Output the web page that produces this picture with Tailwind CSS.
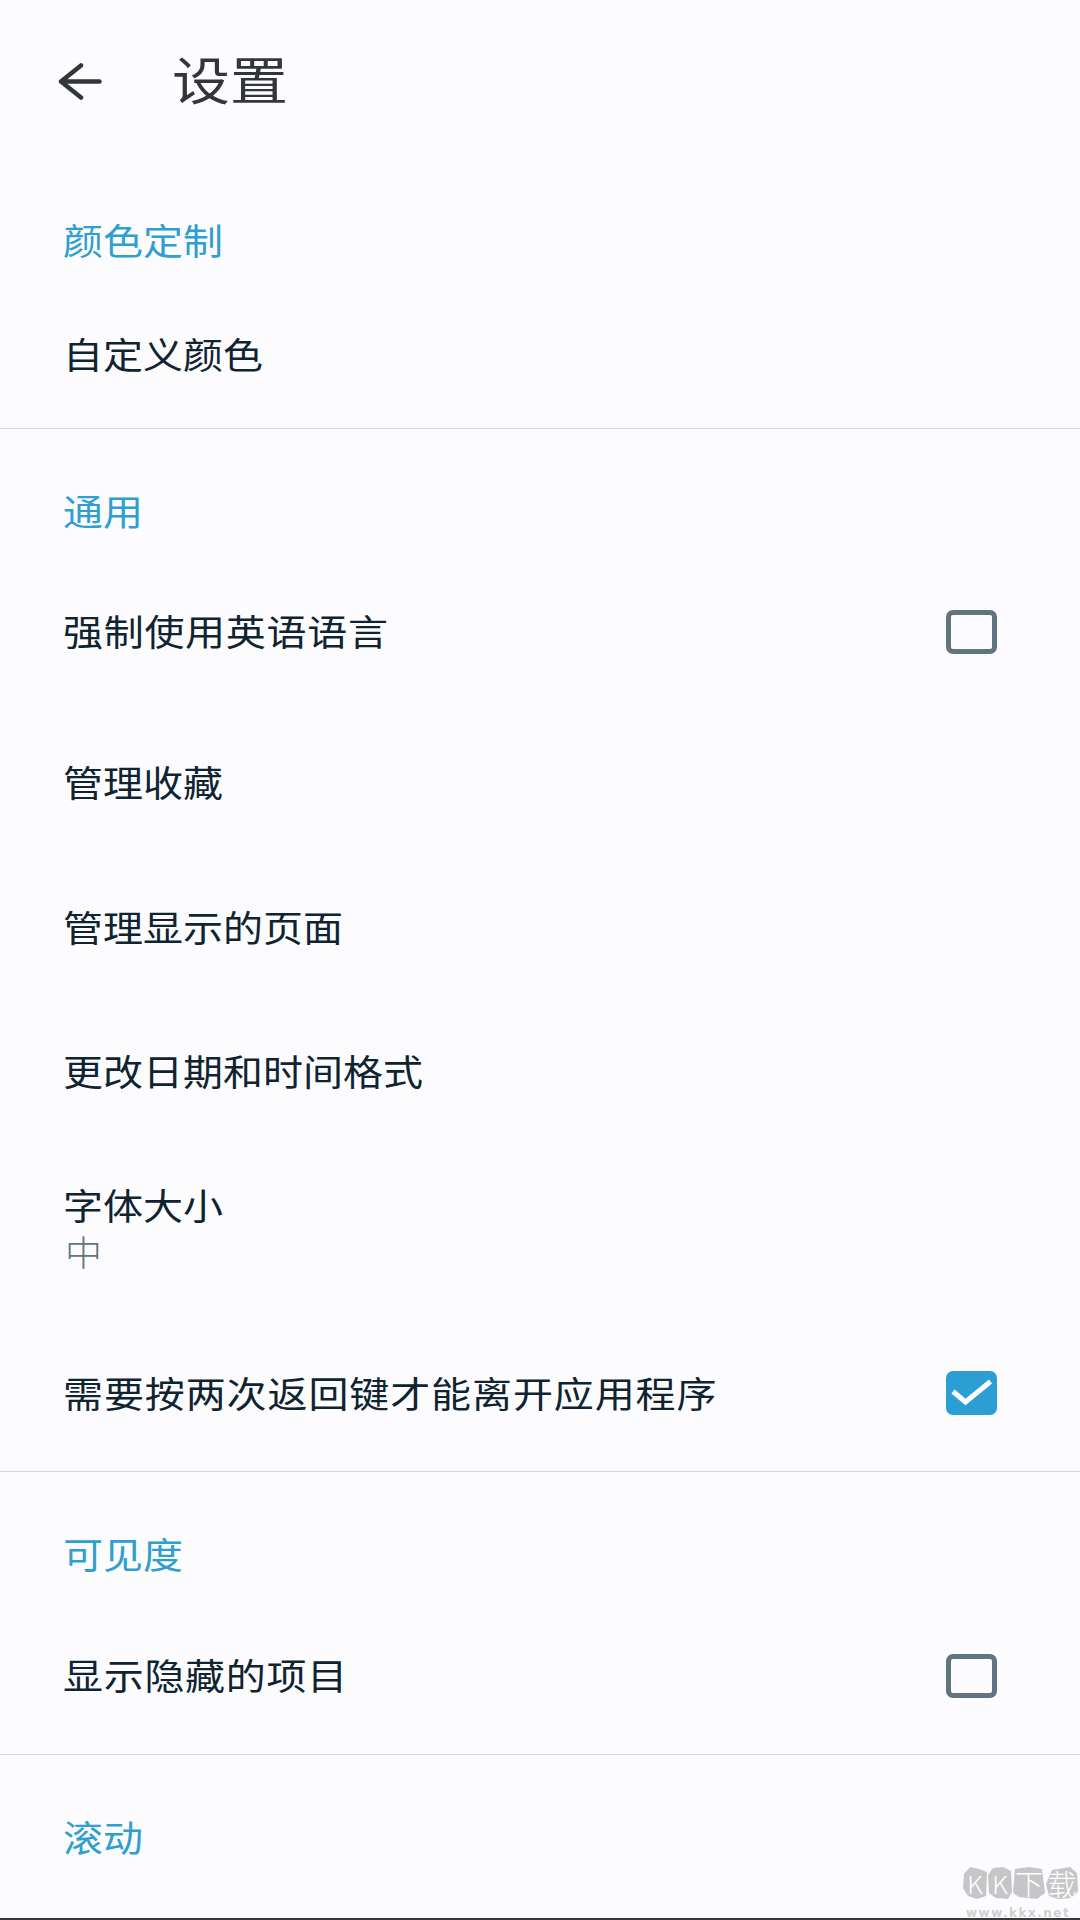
<!DOCTYPE html>
<html lang="zh-CN">
<head>
    <meta charset="UTF-8">
    <meta name="viewport" content="width=device-width, initial-scale=1.0">
    <title>设置</title>
    <script src="https://cdn.jsdelivr.net/npm/@tailwindcss/browser@4"></script>
</head>
<body class="bg-[#fcfcfe] font-['Noto_Sans_CJK_SC',sans-serif]">
    <div class="relative w-[1080px] h-[1920px] overflow-hidden">
        <!-- Header -->
        <div class="flex items-center h-[162px] pl-[58px] text-[#333638]">
            <svg class="w-[44px] h-[37px]" viewBox="0 0 44 37" fill="none" stroke="currentColor" stroke-width="4.500" stroke-linecap="round" stroke-linejoin="round">
                <path d="M41.500 18.500H3M23 2.500 3 18.500l20 16"/>
            </svg>
            <span class="ml-[70px] pb-[6px] text-[58px] leading-none scale-y-[0.88]">设置</span>
        </div>

        <!-- 颜色定制 -->
        <div class="pt-[37px] border-b border-[#d4d6d8]">
            <div class="flex items-center h-[84px] pb-[3px] pl-[63px] text-[40px] text-[#2f9fd0]"><span class="scale-y-[0.9]">颜色定制</span></div>
            <div class="flex items-center h-[145px] pb-[3px] pl-[63px] text-[40px] text-[#0f2430]"><span class="scale-y-[0.9]">自定义颜色</span></div>
        </div>

        <!-- 通用 -->
        <div class="pt-[40px] border-b border-[#d4d6d8]">
            <div class="flex items-center h-[84px] pb-[1px] pl-[63px] text-[40px] text-[#2f9fd0]"><span class="scale-y-[0.9]">通用</span></div>
            <div class="flex items-center justify-between h-[156px] pl-[63px] pr-[83px] text-[40px] text-[#0f2430]">
                <span class="tracking-[0.7px] scale-y-[0.9]">强制使用英语语言</span>
                <span class="w-[51px] h-[44px] mt-[2px] rounded-[7px] border-[5px] border-[#607580]"></span>
            </div>
            <div class="flex items-center h-[146px] pb-[1px] pl-[63px] text-[40px] text-[#0f2430]"><span class="scale-y-[0.9]">管理收藏</span></div>
            <div class="flex items-center h-[144px] pb-[1px] pl-[63px] text-[40px] text-[#0f2430]"><span class="scale-y-[0.9]">管理显示的页面</span></div>
            <div class="flex items-center h-[144px] pb-[1px] pl-[63px] text-[40px] text-[#0f2430]"><span class="scale-y-[0.9]">更改日期和时间格式</span></div>
            <div class="flex flex-col items-start justify-center h-[171px] pb-[3px] pl-[63px]">
                <span class="text-[40px] leading-[48px] text-[#0f2430] scale-y-[0.9]">字体大小</span>
                <span class="pl-[2px] text-[37px] leading-[44px] font-light text-[#607580] scale-y-[0.95]">中</span>
            </div>
            <div class="flex items-center justify-between h-[157px] pl-[63px] pr-[83px] text-[40px] text-[#0f2430]">
                <span class="tracking-[0.9px] scale-y-[0.9]">需要按两次返回键才能离开应用程序</span>
                <span class="w-[51px] h-[44px] rounded-[7px] bg-[#2b9fd3]">
                    <svg class="w-full h-full" viewBox="0 0 51 44" fill="none" stroke="#ffffff" stroke-width="5">
                        <path d="M7 20.500l12.500 10.500 25-20.500"/>
                    </svg>
                </span>
            </div>
        </div>

        <!-- 可见度 -->
        <div class="pt-[40px] border-b border-[#d4d6d8]">
            <div class="flex items-center h-[84px] pb-[1px] pl-[63px] text-[40px] text-[#2f9fd0]"><span class="scale-y-[0.9]">可见度</span></div>
            <div class="flex items-center justify-between h-[158px] pl-[63px] pr-[83px] text-[40px] text-[#0f2430]">
                <span class="tracking-[0.7px] scale-y-[0.9]">显示隐藏的项目</span>
                <span class="w-[51px] h-[44px] mt-[2px] rounded-[7px] border-[5px] border-[#607580]"></span>
            </div>
        </div>

        <!-- 滚动 -->
        <div class="pt-[40px]">
            <div class="flex items-center h-[84px] pb-[1px] pl-[63px] text-[40px] text-[#2f9fd0]"><span class="scale-y-[0.9]">滚动</span></div>
        </div>

        <!-- Watermark -->
        <div class="absolute left-[963px] top-[1867px] w-[115px] flex flex-col">
            <div class="flex gap-[1px] h-[32px]">
                <span class="relative flex items-center justify-center w-[24px] text-[25px] leading-none font-light text-white">
                    <svg class="absolute inset-0 w-full h-full" viewBox="0 0 24 32" fill="#c6c6c8"><path d="M7 0l9 2 8 3-1 24-9 3-9-3-5-8L1 7z"/></svg>
                    <span class="relative">K</span>
                </span>
                <span class="relative flex items-center justify-center w-[24px] text-[25px] leading-none font-light text-white">
                    <svg class="absolute inset-0 w-full h-full" viewBox="0 0 24 32" fill="#c6c6c8"><path d="M5 1l10-1 8 4 1 21-4 7-12-1-7-5L0 8z"/></svg>
                    <span class="relative">K</span>
                </span>
                <span class="relative flex items-center justify-center w-[32px] text-[28px] leading-none font-light text-white">
                    <svg class="absolute inset-0 w-full h-full" viewBox="0 0 32 32" fill="#c6c6c8"><path d="M2 2l14-2 13 2 3 24-8 6-18-2-6-4z"/></svg>
                    <span class="relative">下</span>
                </span>
                <span class="relative flex items-center justify-center w-[32px] text-[29px] leading-none font-light text-white">
                    <svg class="absolute inset-0 w-full h-full" viewBox="0 0 32 32" fill="#c6c6c8"><path d="M6 3l18-3 7 6 1 18-5 7-15 1-9-3-3-12z"/></svg>
                    <span class="relative">载</span>
                </span>
            </div>
            <span class="mt-[8px] pl-[3px] text-[12px] leading-[12px] font-bold tracking-[1.5px] text-[#cfcfd1] font-['DejaVu_Sans',sans-serif]">www.kkx.net</span>
        </div>
        <div class="absolute left-0 right-0 bottom-0 h-[2px] bg-[#3a3a3c]"></div>
    </div>
</body>
</html>
